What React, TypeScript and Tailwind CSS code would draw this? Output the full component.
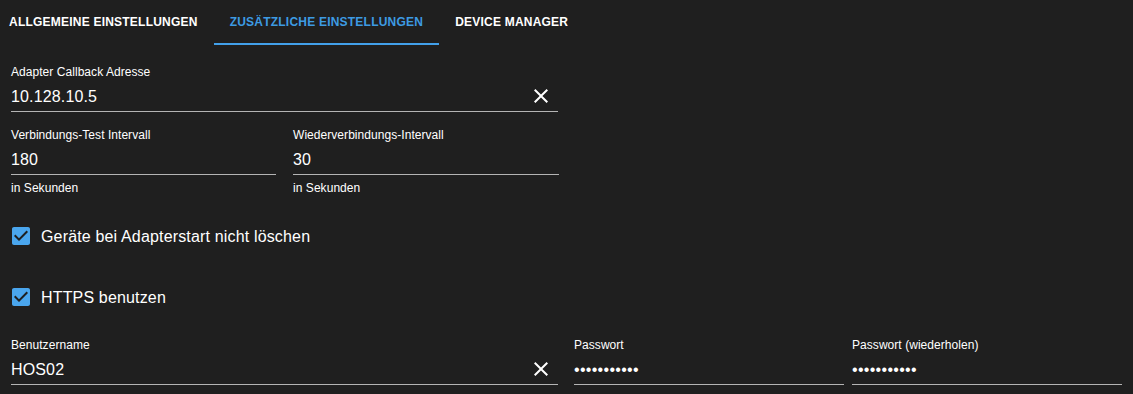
import React from "react";

const TABS = ["Allgemeine Einstellungen", "Zusätzliche Einstellungen", "Device Manager"];

function CloseIcon() {
  return (
    <svg viewBox="0 0 24 24" className="h-6 w-6 shrink-0 fill-white">
      <path d="M19 6.41 17.59 5 12 10.59 6.41 5 5 6.41 10.59 12 5 17.59 6.41 19 12 13.41 17.59 19 19 17.59 13.41 12z" />
    </svg>
  );
}

function CheckedBox() {
  return (
    <svg viewBox="0 0 24 24" className="h-6 w-6 shrink-0 fill-[#4aa6ee]">
      <path d="M19 3H5c-1.11 0-2 .9-2 2v14c0 1.1.89 2 2 2h14c1.11 0 2-.9 2-2V5c0-1.1-.89-2-2-2zm-9 14l-5-5 1.41-1.41L10 14.17l7.59-7.59L19 8l-9 9z" />
    </svg>
  );
}

interface FieldProps {
  label: string;
  value: string;
  width: string;
  clear?: boolean;
  helper?: string;
  password?: boolean;
}

function Field({ label, value, width, clear, helper, password }: FieldProps) {
  return (
    <div className={`${width} shrink-0`}>
      <div className="h-[14px] text-[12px] leading-[14px] tracking-[0.05px] text-white">{label}</div>
      <div className="flex h-[33px] items-center justify-between border-b border-[#b4b4b4] pt-[2px]">
        <span
          className={`text-[16px] leading-[19px] text-white ${
            password ? "tracking-[0.3px]" : "tracking-[0.15px]"
          }`}
        >
          {value}
        </span>
        {clear && (
          <span className="mr-[5px]">
            <CloseIcon />
          </span>
        )}
      </div>
      {helper && (
        <div className="mt-[6px] h-[14px] text-[12px] leading-[14px] tracking-[0.05px] text-white">
          {helper}
        </div>
      )}
    </div>
  );
}

function CheckRow({ label }: { label: string }) {
  return (
    <div className="flex h-[18px] items-center">
      <span className="-ml-[2px]">
        <CheckedBox />
      </span>
      <span className="ml-[8px] text-[16px] leading-[19px] tracking-[0.16px] text-white">{label}</span>
    </div>
  );
}

export default function App() {
  return (
    <div
      className="h-[394px] w-[1133px] overflow-hidden bg-[#1f1f1f]"
      style={{ fontFamily: '"Liberation Sans", Arial, sans-serif' }}
    >
      {/* Tabs */}
      <div className="flex h-[45px]">
        {TABS.map((tab, i) => {
          const active = i === 1;
          return (
            <div
              key={tab}
              className={`flex h-full items-center border-b-2 text-[12px] font-bold uppercase tracking-[0.22px] ${
                i === 0 ? "pl-[9px] pr-[16px]" : "px-[16px]"
              } ${active ? "border-[#42a0ea] text-[#3d9be3]" : "border-transparent text-white"}`}
            >
              {tab}
            </div>
          );
        })}
      </div>

      <div className="pl-[11px]">
        <div className="mt-[20px]">
          <Field label="Adapter Callback Adresse" value="10.128.10.5" width="w-[547px]" clear />
        </div>

        <div className="mt-[16px] flex gap-[17px]">
          <Field label="Verbindungs-Test Intervall" value="180" width="w-[265px]" helper="in Sekunden" />
          <Field label="Wiederverbindungs-Intervall" value="30" width="w-[266px]" helper="in Sekunden" />
        </div>

        <div className="mt-[32px]">
          <CheckRow label="Geräte bei Adapterstart nicht löschen" />
        </div>
        <div className="mt-[43px]">
          <CheckRow label="HTTPS benutzen" />
        </div>

        <div className="mt-[32px] flex">
          <Field label="Benutzername" value="HOS02" width="w-[547px]" clear />
          <div className="ml-[16px]">
            <Field label="Passwort" value="•••••••••••" width="w-[270px]" password />
          </div>
          <div className="ml-[8px]">
            <Field label="Passwort (wiederholen)" value="•••••••••••" width="w-[270px]" password />
          </div>
        </div>
      </div>
    </div>
  );
}
